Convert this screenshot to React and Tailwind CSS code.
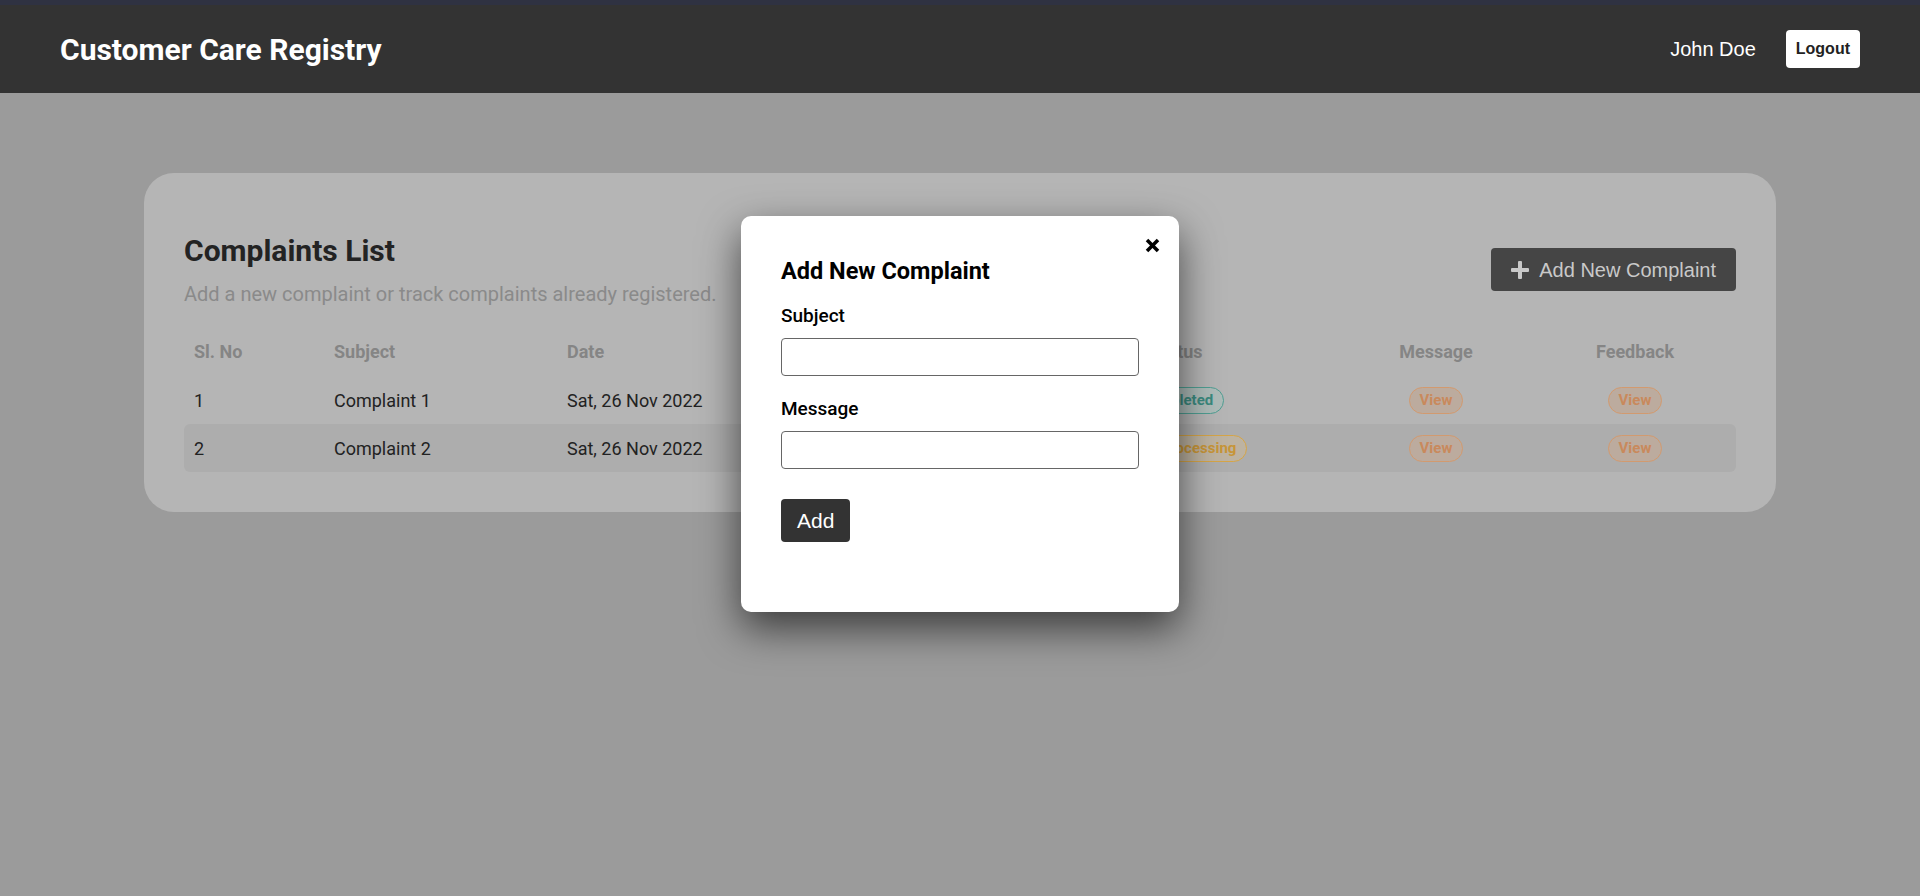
import React from 'react'

const complaints = [
  { id: 1, subject: 'Complaint 1', date: 'Sat, 26 Nov 2022', status: 'Completed' },
  { id: 2, subject: 'Complaint 2', date: 'Sat, 26 Nov 2022', status: 'Under Processing' },
]

const statusStyle = {
  Completed: 'text-[#3b8a7f] border-[#4f9e92] bg-[#aebcb9]',
  'Under Processing': 'text-[#c79538] border-[#d6a547] bg-[#bdb3a2]',
}

const PlusIcon = () => (
  <svg width="18" height="18" viewBox="0 0 18 18">
    <rect x="7" y="0" width="4" height="18" rx="1" fill="#c9c9c9" />
    <rect x="0" y="7" width="18" height="4" rx="1" fill="#c9c9c9" />
  </svg>
)

const CloseIcon = () => (
  <svg width="15" height="15" viewBox="0 0 15 15">
    <line x1="2" y1="2" x2="13" y2="13" stroke="#000" strokeWidth="3.6" />
    <line x1="13" y1="2" x2="2" y2="13" stroke="#000" strokeWidth="3.6" />
  </svg>
)

const ViewBadge = () => (
  <span className="inline-flex items-center h-[27px] px-[10px] rounded-full border border-[#d29a6f] bg-[#bcab9e] text-[#c9895c] text-[15px] font-bold">
    View
  </span>
)

export default function App() {
  return (
    <div className="relative min-h-screen bg-[#9b9b9b] font-['Roboto',sans-serif]">
      <div className="h-[5px] bg-[#2f3242]" />
      <nav className="h-[88px] bg-[#333333] px-[60px] flex items-center justify-between">
        <span className="text-[30px] font-bold text-white">Customer Care Registry</span>
        <div className="flex items-center gap-[30px]">
          <span className="text-[20px] text-white font-['Liberation_Sans',Arial,sans-serif]">John Doe</span>
          <button className="h-[38px] px-[10px] rounded-[4px] bg-white text-[#222] text-[16px] font-bold font-['Liberation_Sans',Arial,sans-serif]">
            Logout
          </button>
        </div>
      </nav>

      <main className="pt-[80px]">
        <div className="w-[85%] mx-auto bg-[#b5b5b5] rounded-[30px] pt-[60px] px-10 pb-10">
          <div className="flex items-center justify-between">
            <div>
              <h1 className="text-[30px] leading-[36px] font-bold text-[#232323]">Complaints List</h1>
              <p className="mt-[13px] text-[20px] leading-[24px] text-[#8a8a8a]">
                Add a new complaint or track complaints already registered.
              </p>
            </div>
            <button className="h-[43px] px-5 flex items-center gap-[10px] rounded-[4px] bg-[#454545] text-[#c9c9c9] text-[20px] font-['Liberation_Sans',Arial,sans-serif]">
              <PlusIcon />
              Add New Complaint
            </button>
          </div>

          <div className="mt-[21px]">
            <div className="grid grid-cols-[140px_233px_459px_321px_198px_200px] h-[49px] items-center text-[18px] font-bold text-[#858585]">
              <span className="pl-[10px]">Sl. No</span>
              <span className="pl-[10px]">Subject</span>
              <span className="pl-[10px]">Date</span>
              <span className="text-center">Status</span>
              <span className="text-center">Message</span>
              <span className="text-center">Feedback</span>
            </div>
            {complaints.map((c, i) => (
              <div
                key={c.id}
                className={`grid grid-cols-[140px_233px_459px_321px_198px_200px] h-[48px] items-center text-[18px] text-[#222] rounded-md ${
                  i % 2 === 1 ? 'bg-[#adadad]' : ''
                }`}
              >
                <span className="pl-[10px]">{c.id}</span>
                <span className="pl-[10px]">{c.subject}</span>
                <span className="pl-[10px]">{c.date}</span>
                <span className="flex justify-center">
                  <span className={`inline-flex items-center h-[27px] px-[10px] rounded-full border text-[15px] font-bold ${statusStyle[c.status]}`}>
                    {c.status}
                  </span>
                </span>
                <span className="flex justify-center"><ViewBadge /></span>
                <span className="flex justify-center"><ViewBadge /></span>
              </div>
            ))}
          </div>
        </div>
      </main>

      <div className="absolute top-[216px] left-1/2 -translate-x-1/2 w-[438px] bg-white rounded-[10px] shadow-[0_16px_40px_rgba(0,0,0,0.62)] pt-[42px] px-10 pb-[70px]">
        <button className="absolute top-[22px] right-[19px]" aria-label="Close">
          <CloseIcon />
        </button>
        <h2 className="text-[23.5px] leading-[26px] font-bold text-black">Add New Complaint</h2>
        <label className="block mt-[21px] text-[19px] leading-[21px] font-medium text-black">Subject</label>
        <input className="block mt-3 w-full h-[38px] rounded-[4px] border border-[#666] bg-white" />
        <label className="block mt-[22px] text-[19px] leading-[21px] font-medium text-black">Message</label>
        <input className="block mt-3 w-full h-[38px] rounded-[4px] border border-[#666] bg-white" />
        <button className="mt-[30px] h-[43px] px-[16px] rounded-[4px] bg-[#333] text-white text-[21px] font-['Liberation_Sans',Arial,sans-serif]">
          Add
        </button>
      </div>
    </div>
  )
}
